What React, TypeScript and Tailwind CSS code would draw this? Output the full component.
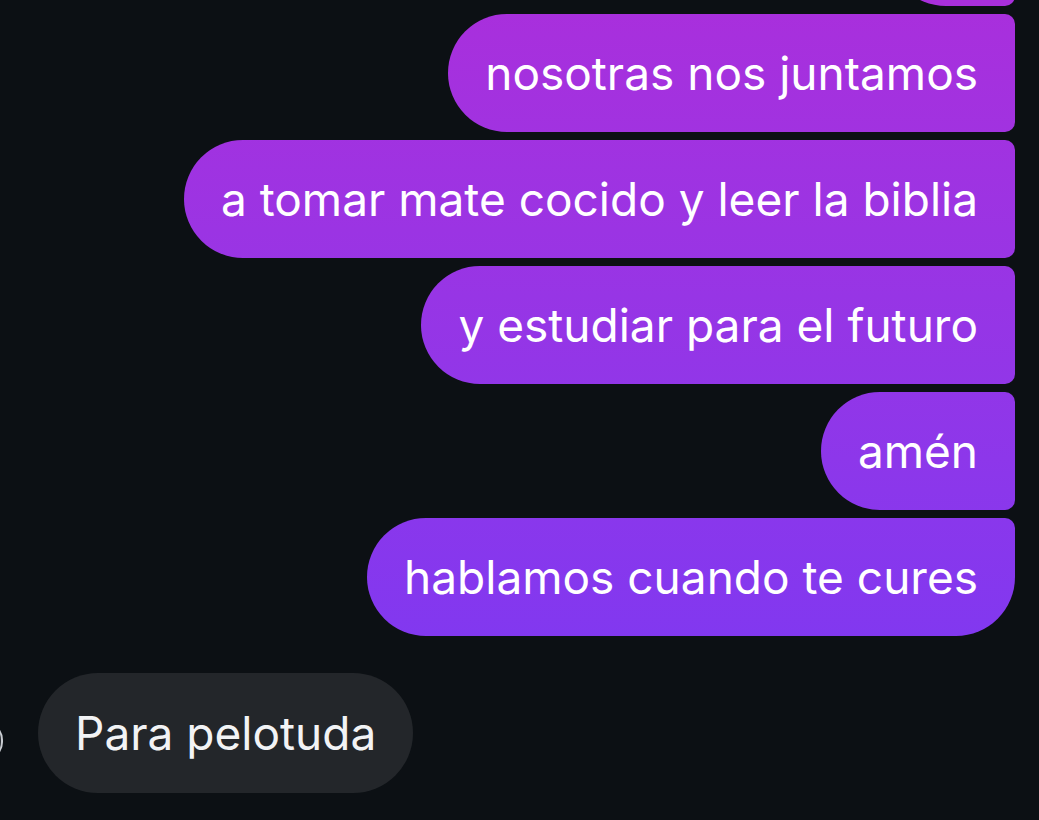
import React from "react";

const sent = [
  "nosotras nos juntamos",
  "a tomar mate cocido y leer la biblia",
  "y estudiar para el futuro",
  "amén",
  "hablamos cuando te cures",
];

const purple = "bg-linear-to-b from-[#a92fdc] to-[#7638f5] bg-fixed";

export default function App() {
  return (
    <div
      className="h-[820px] w-[1039px] overflow-hidden bg-[#0c1014] text-white"
      style={{ fontFamily: "Inter, 'Noto Sans', sans-serif" }}
    >
      <div className="flex flex-col items-end gap-2 pr-6">
        <div className={`${purple} -mt-[112px] h-[118px] w-[128px] rounded-l-[59px] rounded-r-[10px]`} />
        {sent.map((t, i) => (
          <div
            key={t}
            className={`${purple} flex h-[118px] items-center rounded-l-[59px] rounded-tr-[10px] px-[37px] text-[46px] leading-none ${
              i === sent.length - 1 ? "rounded-br-[59px]" : "rounded-br-[10px]"
            }`}
          >
            {t}
          </div>
        ))}
      </div>

      <div className="mt-[37px] flex items-end gap-[35px]">
        <div className="-ml-[35px] mb-[32px] h-[40px] w-[38px] shrink-0 rounded-full border-2 border-[#c9ccd1] bg-[#2a2d32]" />
        <div className="flex h-[120px] items-center rounded-full bg-[#23262a] px-[37px] text-[46px] leading-none text-[#f2f3f5]">
          Para pelotuda
        </div>
      </div>
    </div>
  );
}
